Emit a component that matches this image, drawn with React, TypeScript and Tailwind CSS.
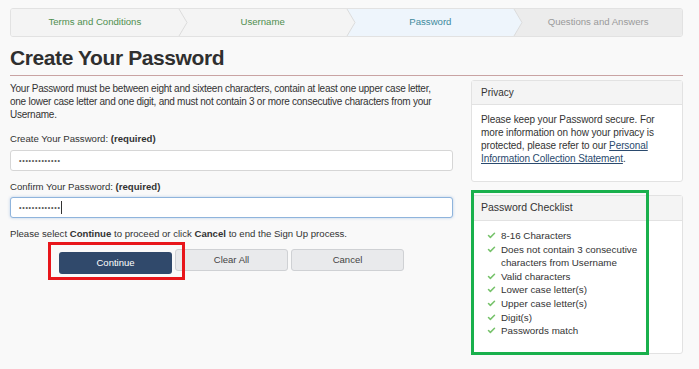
import { Check } from 'lucide-react'

const steps = [
  { label: 'Terms and Conditions', bg: '#f4f4f4', text: 'text-[#4f8f4f]' },
  { label: 'Username', bg: '#f4f4f4', text: 'text-[#4f8f4f]' },
  { label: 'Password', bg: '#eef5fc', text: 'text-[#3f8a9c]' },
  { label: 'Questions and Answers', bg: '#ececec', text: 'text-[#9a9a9a]' }
]

const checklist = [
  '8-16 Characters',
  'Does not contain 3 consecutive characters from Username',
  'Valid characters',
  'Lower case letter(s)',
  'Upper case letter(s)',
  'Digit(s)',
  'Passwords match'
]

function StepBar() {
  return (
    <div className="flex h-[29px] border border-[#e2e2e2] rounded-[3px] overflow-hidden">
      {steps.map((s, i) => (
        <div
          key={s.label}
          className={`relative flex-1 flex items-center justify-center text-[9.6px] ${s.text}`}
          style={{ backgroundColor: s.bg }}
        >
          <span className="relative z-20">{s.label}</span>
          {i < steps.length - 1 && (
            <svg
              className="absolute top-0 right-[-10px] z-10"
              width="12"
              height="27"
              viewBox="0 0 12 27"
            >
              <polygon points="0,0 2,0 10,13.5 2,27 0,27" fill={s.bg} />
              <polyline points="2,0 10,13.5 2,27" fill="none" stroke="#dcdcdc" strokeWidth="1" />
            </svg>
          )}
        </div>
      ))}
    </div>
  )
}

function PasswordInput({ focused }: { focused?: boolean }) {
  return (
    <div
      className={`h-[21px] flex items-center px-[8px] bg-white rounded-[3px] border ${
        focused ? 'border-[#8fb4dc] shadow-[0_0_3px_rgba(102,150,210,0.45)]' : 'border-[#d6d6d6]'
      }`}
    >
      <span className="text-[7px] tracking-[0.75px] text-[#555] leading-none">•••••••••••••</span>
      {focused && <span className="w-px h-[13px] bg-[#333]" />}
    </div>
  )
}

export default function App() {
  return (
    <div className="w-[699px] h-[369px] bg-[#f9f9f9] overflow-hidden px-[10px] pt-[8px] pr-[16px] font-['Liberation_Sans',Arial,sans-serif] text-[#333]">
      <StepBar />

      {/* Title */}
      <h1 className="mt-[7px] text-[21px] leading-[28px] font-bold tracking-[-0.4px] text-[#2f2f2f] pb-[3px] border-b border-[#c9a3a3]">
        Create Your Password
      </h1>

      <div className="flex gap-[18px] mt-[4px]">
        {/* Left column */}
        <div className="w-[443px] shrink-0 pt-[2px]">
          <p className="text-[10px] tracking-[-0.25px] leading-[13px] text-[#333]">
            Your Password must be between eight and sixteen characters, contain at least one upper case letter,
            <br />
            one lower case letter and one digit, and must not contain 3 or more consecutive characters from your
            <br />
            Username.
          </p>

          <div className="mt-[11px] text-[9.6px] leading-[13px]">
            Create Your Password: <b>(required)</b>
          </div>
          <div className="mt-[5px]">
            <PasswordInput />
          </div>

          <div className="mt-[9px] text-[9.6px] leading-[13px]">
            Confirm Your Password: <b>(required)</b>
          </div>
          <div className="mt-[4px]">
            <PasswordInput focused />
          </div>

          <div className="mt-[9px] text-[9.6px] leading-[13px]">
            Please select <b>Continue</b> to proceed or click <b>Cancel</b> to end the Sign Up process.
          </div>

          <div className="flex gap-[3px] mt-[9px] ml-[49px]">
            <div className="relative">
              <button className="w-[113px] h-[22px] rounded-[3px] bg-[#30496b] text-white text-[9.5px]">
                Continue
              </button>
              <div className="absolute left-[-11px] top-[-7px] w-[137px] h-[38px] border-[3px] border-[#e8161b] pointer-events-none" />
            </div>
            <button className="w-[113px] h-[22px] rounded-[3px] bg-[#e9eaec] border border-[#cfd1d4] text-[#444] text-[9.5px]">
              Clear All
            </button>
            <button className="w-[113px] h-[22px] rounded-[3px] bg-[#e9eaec] border border-[#cfd1d4] text-[#444] text-[9.5px]">
              Cancel
            </button>
          </div>
        </div>

        {/* Right column */}
        <div className="w-[212px] shrink-0">
          <div className="border border-[#e2e2e2] rounded-[3px] bg-white">
            <div className="h-[24px] flex items-center px-[9px] bg-[#f4f4f4] border-b border-[#e2e2e2] text-[10px] text-[#333]">
              Privacy
            </div>
            <div className="px-[9px] pt-[8px] pb-[16px] text-[10px] tracking-[-0.1px] leading-[13px] text-[#333]">
              Please keep your Password secure. For
              <br />
              more information on how your privacy is
              <br />
              protected, please refer to our <span className="underline text-[#2a4a6e]">Personal</span>
              <br />
              <span className="underline text-[#2a4a6e]">Information Collection Statement</span>.
            </div>
          </div>

          <div className="relative mt-[13px] border border-[#e2e2e2] rounded-[3px] bg-white">
            <div className="h-[25px] flex items-center px-[9px] bg-[#f4f4f4] border-b border-[#e2e2e2] text-[10.5px] text-[#333]">
              Password Checklist
            </div>
            <ul className="pl-[15px] pr-[40px] pt-[8px] pb-[15px] text-[9.8px] leading-[13.6px]">
              {checklist.map(item => (
                <li key={item} className="flex gap-[5px]">
                  <Check className="w-[9px] h-[9px] mt-[2px] shrink-0 text-[#76c26a]" strokeWidth={4} />
                  <span>{item}</span>
                </li>
              ))}
            </ul>
            <div className="absolute left-[-1px] top-[-6px] w-[178px] h-[165px] border-[3px] border-[#19b04c] pointer-events-none" />
          </div>
        </div>
      </div>
    </div>
  )
}
